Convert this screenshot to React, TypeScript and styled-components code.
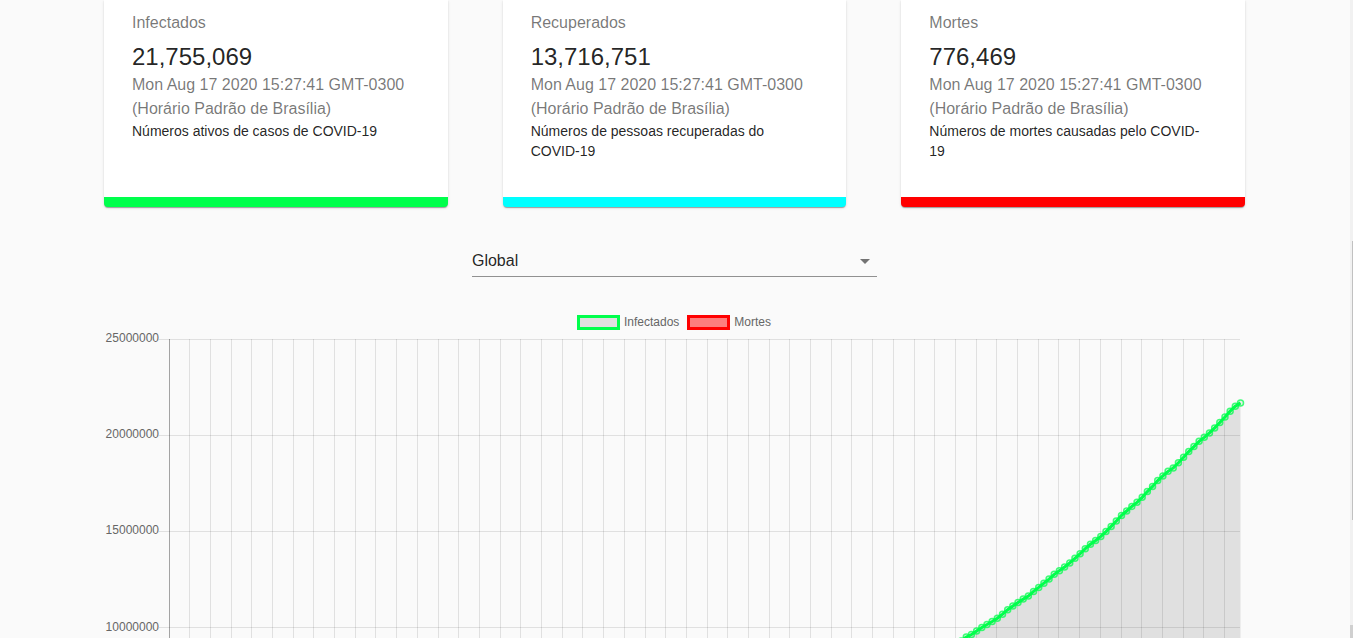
import React from "react";
import styled, { createGlobalStyle } from "styled-components";

const GREEN = "#00ff4c";
const RED = "#ff0000";
const CYAN = "#00ffff";

const GlobalStyle = createGlobalStyle`
  *, *::before, *::after { box-sizing: border-box; }
  body {
    margin: 0;
    background: #fafafa;
    color: rgba(0, 0, 0, 0.87);
    font-family: "Liberation Sans", Arial, sans-serif;
  }
`;

const Page = styled.div`
  display: flex;
  height: 100vh;
  overflow: hidden;
`;

const Main = styled.main`
  flex: 1;
  min-width: 0;
  padding: 0 105px 0 104px;
  overflow: hidden;
`;

const Cards = styled.section`
  display: grid;
  grid-template-columns: repeat(3, 1fr);
  gap: 55px;
`;

const Card = styled.article<{ $accent: string }>`
  padding: 11px 32px 36px 28px;
  background: #fff;
  border-bottom: 10px solid ${({ $accent }) => $accent};
  border-radius: 0 0 4px 4px;
  box-shadow:
    0 2px 1px -1px rgba(0, 0, 0, 0.2),
    0 1px 1px 0 rgba(0, 0, 0, 0.14),
    0 1px 3px 0 rgba(0, 0, 0, 0.12);
`;

const CardTitle = styled.p`
  margin: 0 0 6px;
  color: rgba(0, 0, 0, 0.54);
  font-size: 16px;
  line-height: 24px;
`;

const CardValue = styled.h2`
  margin: 0;
  font-size: 24px;
  font-weight: 400;
  line-height: 32px;
`;

const CardDate = styled.p`
  margin: 0;
  color: rgba(0, 0, 0, 0.54);
  font-size: 16px;
  line-height: 24px;
`;

const CardText = styled.p`
  margin: 0;
  font-size: 14px;
  line-height: 20px;
`;

const Picker = styled.div`
  display: grid;
  align-items: center;
  width: 35.5%;
  margin: 38px auto;
  border-bottom: 1px solid rgba(0, 0, 0, 0.42);
`;

const PickerSelect = styled.select`
  grid-area: 1 / 1;
  width: 100%;
  height: 31px;
  padding: 0 24px 0 0;
  border: 0;
  outline: 0;
  appearance: none;
  background: transparent;
  color: inherit;
  font: 16px "Liberation Sans", Arial, sans-serif;
`;

const PickerArrow = styled.svg`
  grid-area: 1 / 1;
  justify-self: end;
  width: 24px;
  height: 24px;
  fill: rgba(0, 0, 0, 0.54);
  pointer-events: none;
`;

const Legend = styled.ul`
  display: flex;
  justify-content: center;
  gap: 8px;
  margin: 0;
  padding: 0 1px 0 0;
  list-style: none;
`;

const LegendItem = styled.li`
  display: flex;
  gap: 4px;
  height: 16px;
  color: #666;
  font-size: 12px;
  line-height: 14px;
`;

const Swatch = styled.span<{ $line: string; $fill: string }>`
  width: 43px;
  height: 15px;
  border: 3px solid ${({ $line }) => $line};
  background: ${({ $fill }) => $fill};
`;

const Plot = styled.svg`
  display: block;
  width: 100%;
  height: auto;
  overflow: visible;
  font-size: 12px;
`;

const ScrollTrack = styled.div`
  display: grid;
  grid-template-rows: 241fr 279fr 105fr 13px;
  width: 3px;
  background: #f1f1f1;
`;

const ScrollThumb = styled.div`
  grid-row: 2;
  margin-left: 2px;
  background: #c1c1c1;
`;

const ScrollCorner = styled.div`
  grid-row: 4;
  background: #d0d0d0;
`;

const DATE = "Mon Aug 17 2020 15:27:41 GMT-0300 (Horário Padrão de Brasília)";

const stats = [
  { title: "Infectados", value: 21755069, text: "Números ativos de casos de COVID-19", accent: GREEN },
  { title: "Recuperados", value: 13716751, text: "Números de pessoas recuperadas do COVID-19", accent: CYAN },
  { title: "Mortes", value: 776469, text: "Números de mortes causadas pelo COVID-19", accent: RED },
];

// Daily totals in millions of cases; the first 154 days follow a power curve.
const recent = [
  9.51, 9.64, 9.82, 10.01, 10.16, 10.32, 10.49, 10.7, 10.93, 11.12, 11.31,
  11.48, 11.64, 11.88, 12.09, 12.31, 12.52, 12.77, 12.96, 13.15, 13.36, 13.6,
  13.84, 14.1, 14.33, 14.53, 14.74, 14.99, 15.26, 15.54, 15.83, 16.06, 16.3,
  16.51, 16.77, 17.07, 17.34, 17.64, 17.88, 18.12, 18.3, 18.57, 18.85, 19.15,
  19.41, 19.68, 19.89, 20.12, 20.38, 20.66, 20.95, 21.25, 21.51, 21.68,
];
const early = Array.from({ length: 154 }, (_, day) => 9.3 * Math.pow(day / 153, 2.6));
const infected = [...early, ...recent];

const plot = { left: 65, right: 1136, top: 8, bottom: 489, max: 25 };
const dayX = (day: number) =>
  plot.left + 0.5 + (day * (plot.right - plot.left)) / (infected.length - 1);
const valueY = (value: number) =>
  plot.bottom - (value * (plot.bottom - plot.top)) / plot.max;

const yTicks = [25, 20, 15, 10];
const xTicks = Array.from({ length: 52 }, (_, i) => Math.floor(dayX(i * 4) - 0.5) + 0.5);

function Chart() {
  const points = infected.map((value, day) => ({ x: dayX(day), y: valueY(value) }));
  const line = points.map(({ x, y }) => `${x.toFixed(2)},${y.toFixed(2)}`).join(" L");
  return (
    <Plot viewBox="0 0 1141 520" role="img" aria-label="Infectados e mortes por dia">
      {yTicks.map((tick) => {
        const y = Math.floor(valueY(tick)) + 0.5;
        return (
          <g key={tick}>
            <line x1={55} x2={plot.right} y1={y} y2={y} stroke="rgba(0,0,0,0.1)" />
            <text x={55} y={Math.round(valueY(tick) + 3)} textAnchor="end" fill="#666">
              {tick * 1000000}
            </text>
          </g>
        );
      })}
      {xTicks.map((x, i) => (
        <line
          key={x}
          x1={x}
          x2={x}
          y1={plot.top}
          y2={plot.bottom + 10}
          stroke={i === 0 ? "rgba(0,0,0,0.35)" : "rgba(0,0,0,0.1)"}
        />
      ))}
      <path
        d={`M${line} L${plot.right + 0.5},${plot.bottom} L${plot.left},${plot.bottom} Z`}
        fill="rgba(0,0,0,0.1)"
      />
      {points.map(({ x, y }, day) => (
        <circle
          key={day}
          cx={x}
          cy={y}
          r={3}
          fill="rgba(0,0,0,0.05)"
          stroke={GREEN}
          strokeWidth={1.5}
          strokeOpacity={0.75}
        />
      ))}
      <path d={`M${line}`} fill="none" stroke={GREEN} strokeWidth={3} />
    </Plot>
  );
}

export default function App() {
  return (
    <>
      <GlobalStyle />
      <Page>
        <Main>
          <Cards>
            {stats.map((stat) => (
              <Card key={stat.title} $accent={stat.accent}>
                <CardTitle>{stat.title}</CardTitle>
                <CardValue>{stat.value.toLocaleString("en-US")}</CardValue>
                <CardDate>{DATE}</CardDate>
                <CardText>{stat.text}</CardText>
              </Card>
            ))}
          </Cards>
          <Picker>
            <PickerSelect aria-label="País" defaultValue="global">
              <option value="global">Global</option>
            </PickerSelect>
            <PickerArrow viewBox="0 0 24 24" aria-hidden="true">
              <path d="M7 10l5 5 5-5z" />
            </PickerArrow>
          </Picker>
          <Legend>
            <LegendItem>
              <Swatch $line={GREEN} $fill="rgba(0,0,0,0.1)" />
              Infectados
            </LegendItem>
            <LegendItem>
              <Swatch $line={RED} $fill="rgba(255,0,0,0.5)" />
              Mortes
            </LegendItem>
          </Legend>
          <Chart />
        </Main>
        <ScrollTrack aria-hidden="true">
          <ScrollThumb />
          <ScrollCorner />
        </ScrollTrack>
      </Page>
    </>
  );
}
